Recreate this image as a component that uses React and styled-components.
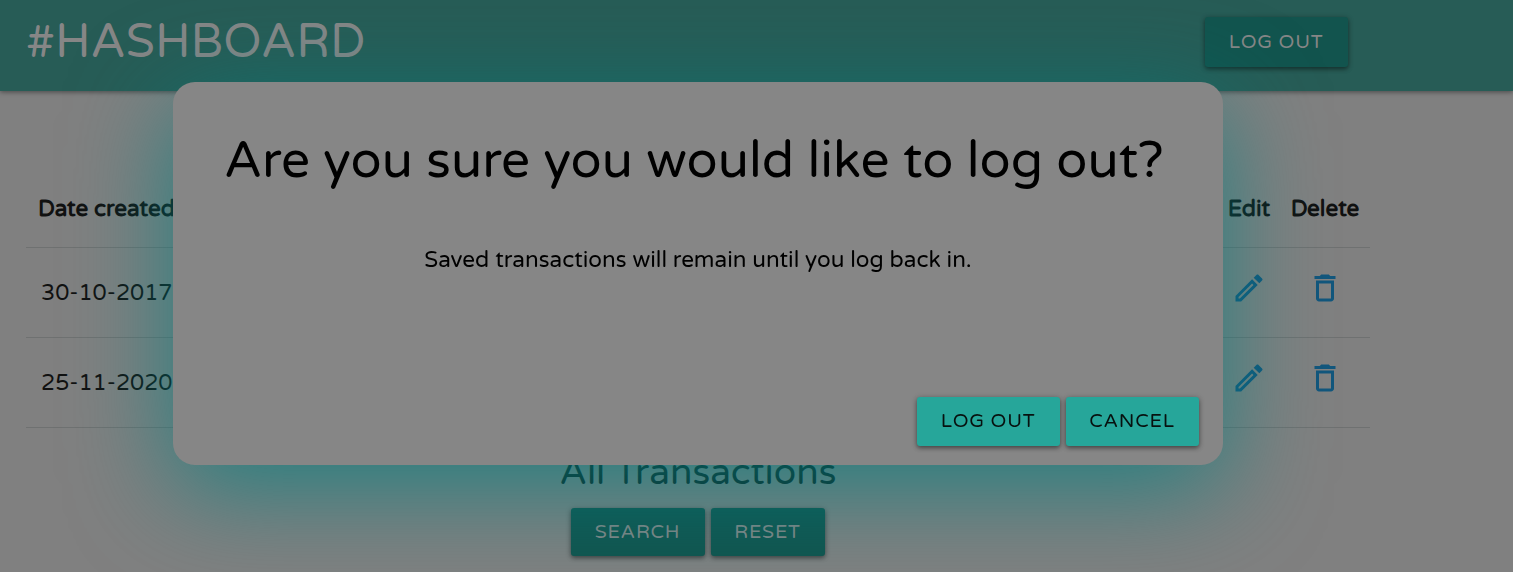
import React from "react";
import styled, { createGlobalStyle } from "styled-components";
import { MdOutlineEdit, MdDeleteOutline } from "react-icons/md";

const GlobalStyle = createGlobalStyle`
  * { box-sizing: border-box; }
  html, body { margin: 0; height: 572px; overflow: hidden; background: #808080; }
  body { font-family: "Varela Round", "Noto Sans", sans-serif; font-size: 22.5px; color: #111; }
  h1, h2, p { margin: 0; font-weight: 400; white-space: nowrap; }
`;

const Page = styled.div`
  height: 572px;
  display: flex;
  flex-direction: column;
`;

const Header = styled.header`
  height: 91px;
  flex: none;
  display: flex;
  justify-content: space-between;
  align-items: flex-start;
  padding: 17px 165px 0 26px;
  background: #275c56;
  box-shadow: 0 1px 5px rgba(0, 0, 0, 0.45);
`;

const Brand = styled.h1`
  font-size: 47.25px;
  line-height: 52px;
  color: #868686;
`;

const Button = styled.button`
  width: ${(p) => p.$width}px;
  height: ${(p) => p.$height || 49}px;
  padding: 0 1px ${(p) => (p.$active ? 2 : 0)}px 0;
  border: 0;
  border-radius: 3px;
  font-family: "Varela Round", "Noto Sans", sans-serif;
  font-size: 19.5px;
  line-height: ${(p) => (p.$active ? 46 : 48)}px;
  letter-spacing: 0.75px;
  color: ${(p) => (p.$active ? "#07110f" : "#868686")};
  background: ${(p) => (p.$active ? "#26a69a" : "#12544e")};
  box-shadow: 0 2px 4px rgba(0, 0, 0, 0.4), 0 1px 6px rgba(0, 0, 0, 0.18);
`;

const Table = styled.section`
  width: 1344px;
  margin: 79px 0 0 26px;
`;

const Row = styled.div`
  display: grid;
  grid-template-columns: 1fr 62px 90px;
  align-items: center;
  height: ${(p) => (p.$head ? 78 : 90)}px;
  border-bottom: 1px solid #6f7171;
`;

const HeadCell = styled.span`
  font-weight: 700;
  text-align: ${(p) => (p.$center ? "center" : "left")};
  padding-left: ${(p) => (p.$center ? 0 : 12)}px;
`;

const DateCell = styled.span`
  padding-left: 15px;
`;

const IconCell = styled.span`
  display: flex;
  justify-content: center;
  padding-bottom: 9px;
  color: #12567c;
`;

const Transactions = styled.section`
  width: 1396px;
  display: flex;
  flex-direction: column;
  align-items: center;
  padding-top: 20px;
`;

const SectionTitle = styled.h2`
  font-size: 36.9px;
  line-height: 50px;
  color: #10201e;
`;

const ButtonGroup = styled.div`
  display: flex;
  gap: 6px;
  margin-top: 10px;
`;

const Modal = styled.div`
  position: fixed;
  top: 82px;
  left: 173px;
  width: 1050px;
  height: 382.5px;
  display: flex;
  flex-direction: column;
  align-items: center;
  padding: 44px 24px 18.5px;
  border-radius: 22px;
  background: #868686;
  box-shadow: 0 24px 100px rgba(0, 128, 128, 0.75);
  color: #000;
`;

const ModalTitle = styled.h1`
  font-size: 51.3px;
  line-height: 70px;
  margin-right: 8px;
`;

const ModalText = styled.p`
  margin-top: 48px;
  line-height: 32px;
`;

const ModalActions = styled.div`
  display: flex;
  gap: 6px;
  margin-top: auto;
  align-self: flex-end;
`;

const rows = ["30-10-2017", "25-11-2020"];

export default function App() {
  return (
    <>
      <GlobalStyle />
      <Page>
        <Header>
          <Brand>#HASHBOARD</Brand>
          <Button $width={143} $height={50}>LOG OUT</Button>
        </Header>
        <Table>
          <Row $head>
            <HeadCell>Date created</HeadCell>
            <HeadCell $center>Edit</HeadCell>
            <HeadCell $center>Delete</HeadCell>
          </Row>
          {rows.map((date) => (
            <Row key={date}>
              <DateCell>{date}</DateCell>
              <IconCell><MdOutlineEdit size={36} /></IconCell>
              <IconCell><MdDeleteOutline size={36} /></IconCell>
            </Row>
          ))}
        </Table>
        <Transactions>
          <SectionTitle>All Transactions</SectionTitle>
          <ButtonGroup>
            <Button $width={134} $height={48}>SEARCH</Button>
            <Button $width={114} $height={48}>RESET</Button>
          </ButtonGroup>
        </Transactions>
      </Page>
      <Modal role="dialog">
        <ModalTitle>Are you sure you would like to log out?</ModalTitle>
        <ModalText>Saved transactions will remain until you log back in.</ModalText>
        <ModalActions>
          <Button $active $width={143}>LOG OUT</Button>
          <Button $active $width={133}>CANCEL</Button>
        </ModalActions>
      </Modal>
    </>
  );
}
